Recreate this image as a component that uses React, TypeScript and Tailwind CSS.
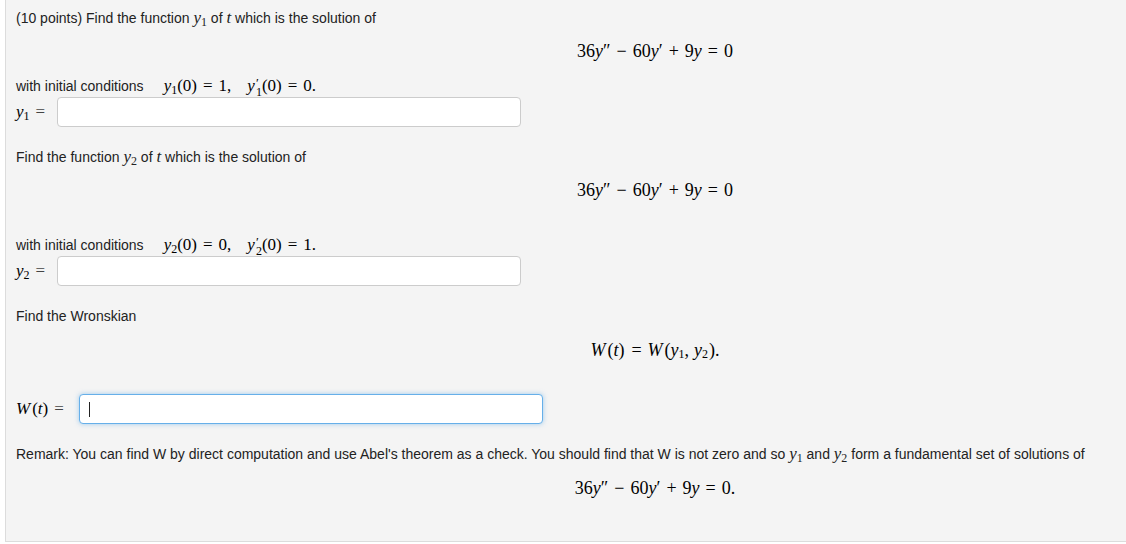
import type { ReactNode } from 'react';

const serif = "font-['Liberation_Serif',serif]";

function V({ children }: { children: ReactNode }) {
  return <i className={`${serif} italic`}>{children}</i>;
}

function Sub({ children }: { children: ReactNode }) {
  return <span className={`${serif} relative top-[4px] text-[12px] leading-none`}>{children}</span>;
}

// y with a prime stacked over a subscript
function YPrimeSub({ n }: { n: string }) {
  return (
    <span className="inline-flex items-center">
      <V>y</V>
      <span className="relative top-[1px] ml-[1px] inline-flex flex-col items-start">
        <span className="h-[9px] text-[13px] leading-[9px]">′</span>
        <span className="h-[10px] text-[12px] leading-[10px]">{n}</span>
      </span>
    </span>
  );
}

function Op({ children }: { children: ReactNode }) {
  return <span className="mx-[6px]">{children}</span>;
}

function Ode({ dot }: { dot?: boolean }) {
  return (
    <div className={`${serif} flex h-5 items-center justify-center text-[18px] text-black`}>
      <span>36</span>
      <V>y</V>
      <span>″</span>
      <Op>−</Op>
      <span>60</span>
      <V>y</V>
      <span>′</span>
      <Op>+</Op>
      <span>9</span>
      <V>y</V>
      <Op>=</Op>
      <span>0{dot ? '.' : ''}</span>
    </div>
  );
}

function AnswerRow({ label, focused, indent }: { label: ReactNode; focused?: boolean; indent: string }) {
  return (
    <div className="flex h-[30px] items-center">
      <div className={`${serif} flex ${indent} items-center text-[17px] text-black`}>{label}</div>
      <div
        className={
          focused
            ? 'flex h-[30px] w-[464px] items-center rounded-[4px] border border-[#66afe9] bg-white px-[9px] shadow-[0_0_5px_rgba(102,175,233,0.6)]'
            : 'h-[30px] w-[464px] rounded-[4px] border border-[#cccccc] bg-white'
        }
      >
        {focused && <span className="h-[15px] w-px bg-[#222]" />}
      </div>
    </div>
  );
}

function InlineY({ n }: { n: string }) {
  return (
    <>
      <V>
        <span className="text-[17px]">y</span>
      </V>
      <Sub>{n}</Sub>
    </>
  );
}

function Conditions({ a, b }: { a: string; b: [string, string] }) {
  return (
    <div className="flex h-5 items-center">
      <span>with initial conditions</span>
      <span className={`${serif} ml-[20px] flex items-center text-[17px] text-black`}>
        <V>y</V>
        <Sub>{a}</Sub>
        <span>(0)</span>
        <Op>=</Op>
        <span>{b[0]},</span>
        <span className="ml-[16px]" />
        <YPrimeSub n={a} />
        <span>(0)</span>
        <Op>=</Op>
        <span>{b[1]}.</span>
      </span>
    </div>
  );
}

export default function App() {
  return (
    <div className="h-[544px] w-[1126px] overflow-hidden bg-white font-['Liberation_Sans',Arial,sans-serif] text-[14px] text-[#222]">
      <div className="ml-[5px] -mt-px h-[543px] w-[1300px] border border-[#dcdcdc] bg-[#f4f4f4] px-[10px] pt-[8px]">
        <div className="flex h-5 items-center">
          (10 points) Find the function&nbsp;<InlineY n="1" />&nbsp;of&nbsp;
          <V>
            <span className="text-[17px]">t</span>
          </V>
          &nbsp;which is the solution of
        </div>

        <div className="mt-[13px]">
          <Ode />
        </div>

        <div className="mt-[15px]">
          <Conditions a="1" b={['1', '0']} />
        </div>

        <div className="mt-px">
          <AnswerRow
            indent="w-[41px]"
            label={
              <>
                <V>y</V>
                <Sub>1</Sub>
                <span className="ml-[6px] text-[#444]">=</span>
              </>
            }
          />
        </div>

        <div className="mt-5 flex h-5 items-center">
          Find the function&nbsp;<InlineY n="2" />&nbsp;of&nbsp;
          <V>
            <span className="text-[17px]">t</span>
          </V>
          &nbsp;which is the solution of
        </div>

        <div className="mt-[13px]">
          <Ode />
        </div>

        <div className="mt-[35px]">
          <Conditions a="2" b={['0', '1']} />
        </div>

        <div className="mt-px">
          <AnswerRow
            indent="w-[41px]"
            label={
              <>
                <V>y</V>
                <Sub>2</Sub>
                <span className="ml-[6px] text-[#444]">=</span>
              </>
            }
          />
        </div>

        <div className="mt-5 flex h-5 items-center">Find the Wronskian</div>

        <div className={`${serif} mt-[14px] flex h-5 items-center justify-center text-[18px] text-black`}>
          <V>W</V>
          <span className="ml-[2px]">(</span>
          <V>t</V>
          <span className="mr-[1px]">)</span>
          <Op>=</Op>
          <V>W</V>
          <span className="ml-[2px]">(</span>
          <V>y</V>
          <Sub>1</Sub>
          <span className="mr-[5px]">,</span>
          <V>y</V>
          <Sub>2</Sub>
          <span className="ml-[1px]">).</span>
        </div>

        <div className="mt-[34px]">
          <AnswerRow
            focused
            indent="w-[63px]"
            label={
              <>
                <V>W</V>
                <span className="ml-[2px]">(</span>
                <V>t</V>
                <span>)</span>
                <span className="ml-[6px] text-[#444]">=</span>
              </>
            }
          />
        </div>

        <div className="mt-5 flex h-5 items-center whitespace-nowrap">
          Remark: You can find W by direct computation and use Abel's theorem as a check. You should find that W is not zero
          and so&nbsp;<InlineY n="1" />&nbsp;and&nbsp;<InlineY n="2" />&nbsp;form a fundamental set of solutions of
        </div>

        <div className="mt-[14px]">
          <Ode dot />
        </div>
      </div>
    </div>
  );
}
